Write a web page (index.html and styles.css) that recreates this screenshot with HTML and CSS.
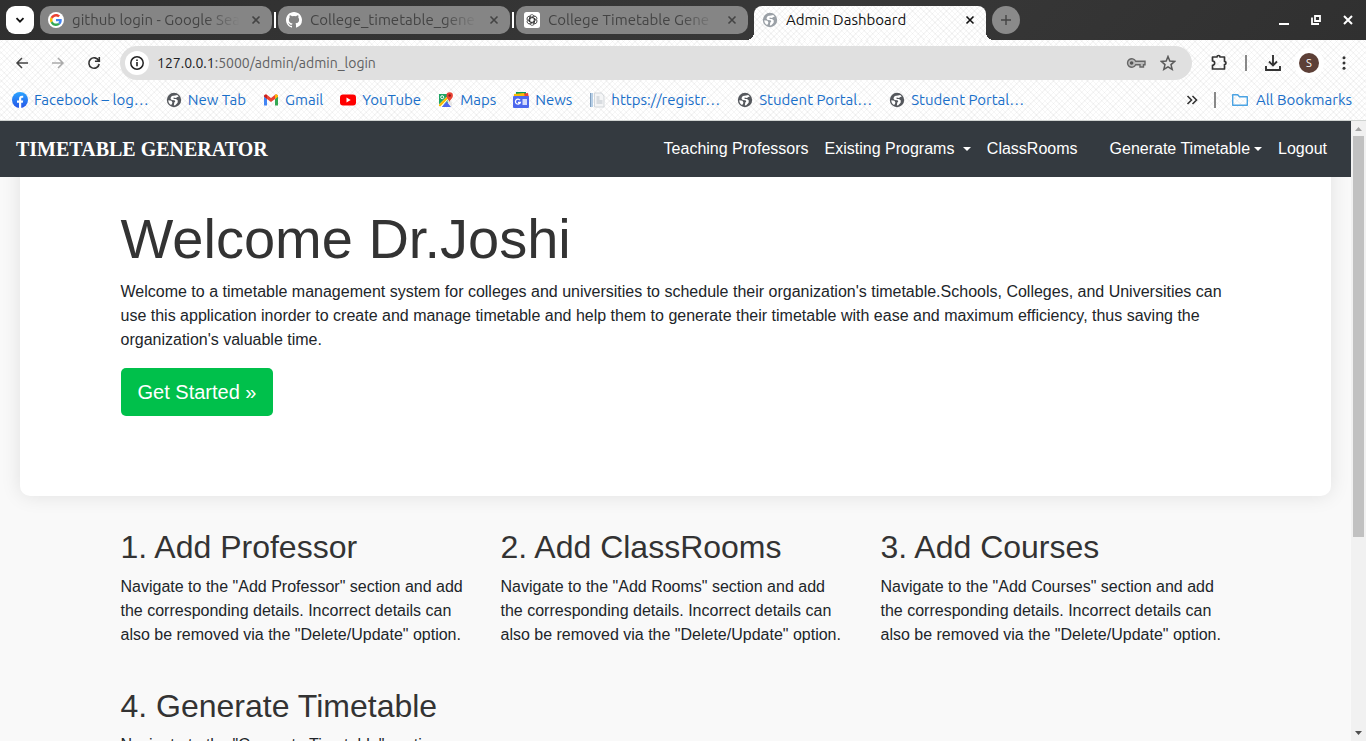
FILE: index.html
```html
<!DOCTYPE html>
<html lang="en">
<head>
<meta charset="utf-8">
<meta name="viewport" content="width=device-width, initial-scale=1">
<title>Admin Dashboard</title>
<link rel="stylesheet" href="styles.css">
</head>
<body>
<svg class="sprite" aria-hidden="true">
  <symbol id="globe" viewBox="0 0 16 16"><circle cx="8" cy="8" r="7.2" fill="currentColor"/><path d="M12.8 4.600 11.200 3 9 3.400 5.800 4 4.400 6.300l1.200 1.700 2.900.2.800 1.300-1 1-.5 2.900 1.500-.2 2.300-2.400.2-2.200-1.800-1.700H7.600V5.600l2.400.3 1.300-1zM2.300 8.200l3.200.6.9 1.700-.6 1.900-1.300.3C3 11.500 2.300 10 2.300 8.200z" fill="#fff"/></symbol>
  <symbol id="close" viewBox="0 0 10 10"><path d="m1.500 1.500 7 7m0-7-7 7" fill="none" stroke="currentColor" stroke-width="1.600"/></symbol>
  <symbol id="google" viewBox="0 0 48 48"><path fill="#ea4335" d="M24 9.500c3.540 0 6.710 1.220 9.210 3.600l6.850-6.850C35.900 2.380 30.470 0 24 0 14.620 0 6.510 5.380 2.560 13.220l7.980 6.190C12.430 13.720 17.740 9.500 24 9.500z"/><path fill="#4285f4" d="M46.980 24.550c0-1.570-.15-3.090-.38-4.550H24v9.020h12.940c-.58 2.960-2.260 5.480-4.780 7.180l7.730 6c4.510-4.180 7.090-10.360 7.090-17.650z"/><path fill="#fbbc05" d="M10.530 28.590A14.500 14.500 0 0 1 9.770 24c0-1.600.27-3.140.76-4.590l-7.980-6.190A23.900 23.900 0 0 0 0 24c0 3.880.92 7.540 2.560 10.780z"/><path fill="#34a853" d="M24 48c6.480 0 11.930-2.130 15.890-5.810l-7.730-6c-2.150 1.450-4.920 2.300-8.160 2.300-6.260 0-11.570-4.220-13.470-9.910l-7.980 6.190C6.510 42.620 14.620 48 24 48z"/></symbol>
  <symbol id="github" viewBox="0 0 16 16"><path fill="#fff" d="M8 0C3.580 0 0 3.580 0 8c0 3.540 2.290 6.530 5.470 7.590.4.070.55-.17.55-.38v-1.340c-2.230.48-2.700-1.070-2.700-1.070-.36-.92-.89-1.170-.89-1.170-.73-.5.050-.49.050-.49.800.060 1.230.830 1.230.830.710 1.220 1.870.87 2.330.66.070-.52.28-.87.500-1.070-1.770-.2-3.640-.89-3.640-3.950 0-.87.310-1.590.820-2.150-.08-.2-.36-1.020.08-2.120 0 0 .67-.21 2.200.82a7.600 7.600 0 0 1 4 0c1.530-1.040 2.200-.82 2.200-.82.440 1.100.160 1.920.080 2.120.510.560.820 1.270.820 2.150 0 3.070-1.870 3.750-3.650 3.950.290.250.540.730.540 1.480v2.200c0 .210.150.460.550.380A8 8 0 0 0 16 8c0-4.420-3.580-8-8-8z"/></symbol>
  <symbol id="knot" viewBox="0 0 16 16"><rect width="16" height="16" rx="2.500" fill="#fff"/><g fill="none" stroke="#222" stroke-width=".7"><path id="petal" d="M5.500 10V5.100a2.400 2.400 0 0 1 4.500-1.200M7.600 6.300l3.200-1.800"/><use href="#petal" transform="rotate(60 8 8)"/><use href="#petal" transform="rotate(120 8 8)"/><use href="#petal" transform="rotate(180 8 8)"/><use href="#petal" transform="rotate(240 8 8)"/><use href="#petal" transform="rotate(300 8 8)"/></g></symbol>
</svg>

<div class="browser">
  <header class="tabstrip">
    <button class="tab-search" aria-label="Search tabs"><svg width="10" height="10" viewBox="0 0 10 10"><path d="m1.500 3.200 3.500 3.500 3.500-3.500" fill="none" stroke="#111" stroke-width="1.800"/></svg></button>
    <div class="tabs">
      <div class="tab"><span class="tab-badge"><svg width="12" height="12"><use href="#google"/></svg></span><span class="tab-title">github login - Google Sea</span><button class="tab-close" aria-label="Close tab"><svg width="10" height="10"><use href="#close"/></svg></button></div>
      <div class="tab divided"><svg width="16" height="16"><use href="#github"/></svg><span class="tab-title">College_timetable_gene</span><button class="tab-close" aria-label="Close tab"><svg width="10" height="10"><use href="#close"/></svg></button></div>
      <div class="tab divided"><svg width="16" height="16"><use href="#knot"/></svg><span class="tab-title">College Timetable Gene</span><button class="tab-close" aria-label="Close tab"><svg width="10" height="10"><use href="#close"/></svg></button></div>
      <div class="tab active"><svg class="pale" width="16" height="16"><use href="#globe"/></svg><span class="tab-title">Admin Dashboard</span><button class="tab-close" aria-label="Close tab"><svg width="10" height="10"><use href="#close"/></svg></button></div>
    </div>
    <button class="new-tab" aria-label="New tab"><svg width="12" height="12" viewBox="0 0 12 12"><path d="M6 1v10M1 6h10" stroke="#444" stroke-width="1.400"/></svg></button>
    <div class="window-controls">
      <button aria-label="Minimize"><svg width="12" height="12" viewBox="0 0 12 12"><path d="M1 10h10" stroke="#fff" stroke-width="2"/></svg></button>
      <button aria-label="Restore"><svg width="12" height="12" viewBox="0 0 12 12"><path d="M5 2h5v5H5zM2 3.500V10h7" fill="none" stroke="#fff" stroke-width="1.800"/></svg></button>
      <button aria-label="Close window"><svg width="12" height="12" viewBox="0 0 12 12"><path d="m2 2 8 8m0-8-8 8" stroke="#fff" stroke-width="2"/></svg></button>
    </div>
  </header>

  <div class="chrome">
    <div class="toolbar">
      <div class="nav-buttons">
        <button aria-label="Back"><svg width="16" height="16" viewBox="0 0 16 16"><path d="M14 8H3m5-5L3 8l5 5" fill="none" stroke="#444" stroke-width="1.500"/></svg></button>
        <button aria-label="Forward"><svg width="16" height="16" viewBox="0 0 16 16"><path d="M2 8h11M8 3l5 5-5 5" fill="none" stroke="#aaa" stroke-width="1.500"/></svg></button>
        <button aria-label="Reload"><svg width="16" height="16" viewBox="0 0 16 16"><path d="M12.700 5.600A5.200 5.200 0 1 0 13.200 9M13.300 2v4.200H9" fill="none" stroke="#333" stroke-width="1.600"/></svg></button>
      </div>
      <div class="omnibox">
        <button class="site-info" aria-label="Site information"><svg width="16" height="16" viewBox="0 0 16 16"><circle cx="8" cy="8" r="6.200" fill="none" stroke="#222" stroke-width="1.500"/><path d="M8 7v4.300M8 4.500v1.500" stroke="#222" stroke-width="1.600"/></svg></button>
        <span class="url"><span class="host">127.0.0.1</span>:5000/admin/admin_login</span>
        <button aria-label="Passwords"><svg width="20" height="16" viewBox="0 0 20 16"><path d="M9.700 6.200A4.300 4.300 0 1 0 9.700 9.800H14V12h3.500V9.800H19V6.200z" fill="#bbb" stroke="#666" stroke-width="1.400"/><circle cx="5.600" cy="8" r="1.800" fill="#555"/></svg></button>
        <button aria-label="Bookmark this page"><svg width="16" height="16" viewBox="0 0 16 16"><path d="m8 1.500 1.800 4.500 4.900.4-3.700 3.200 1.200 4.800L8 11.800l-4.200 2.600L5 9.600 1.300 6.400 6.200 6z" fill="none" stroke="#5a5a5a" stroke-width="1.500"/></svg></button>
      </div>
      <div class="actions">
        <button aria-label="Extensions"><svg width="18" height="18" viewBox="0 0 18 18"><path d="M2.500 3H7a1.500 1.500 0 0 1 3 0h4.500v4.500a1.500 1.500 0 0 1 0 3V15h-12v-3.700a2 2 0 0 0 0-4.300z" fill="none" stroke="#333" stroke-width="1.700" stroke-linejoin="round"/></svg></button>
        <span class="rule"></span>
        <button aria-label="Downloads"><svg width="18" height="18" viewBox="0 0 18 18"><path d="M9 1v10M5 7.500l4 4 4-4M2 12v4h14v-4" fill="none" stroke="#333" stroke-width="1.900"/></svg></button>
        <button class="avatar" aria-label="Profile">S</button>
        <button aria-label="Menu"><svg width="16" height="16" viewBox="0 0 16 16"><g fill="#333"><circle cx="8" cy="2.800" r="1.500"/><circle cx="8" cy="8" r="1.500"/><circle cx="8" cy="13.200" r="1.500"/></g></svg></button>
      </div>
    </div>

    <nav class="bookmarks" aria-label="Bookmarks">
      <a href="#"><svg width="16" height="16" viewBox="0 0 16 16"><defs><linearGradient id="fb" x1="0" y1="0" x2="0" y2="1"><stop offset="0" stop-color="#2aa4ff"/><stop offset="1" stop-color="#2554e8"/></linearGradient></defs><circle cx="8" cy="8" r="8" fill="url(#fb)"/><path d="M7 16v-5.200H5V8.400h2V6.900C7 4.700 8.200 3.700 10 3.700l1.200.1v2h-.9c-.9 0-1.100.4-1.100 1.100v1.500h2l-.4 2.400H9.200V16z" fill="#fff"/></svg>Facebook – log…</a>
      <a href="#"><svg class="dark" width="16" height="16"><use href="#globe"/></svg>New Tab</a>
      <a href="#"><svg width="16" height="16" viewBox="0 0 16 16"><path d="M1 13.500h3V7L1 4.500z" fill="#4285f4"/><path d="M12 13.500h3v-9L12 7z" fill="#34a853"/><path d="M1 4.500C1 2.500 3 2 4.200 3L8 6l3.800-3C13 2 15 2.500 15 4.500l-3 2.600-4 3-4-3z" fill="#ea4335"/><path d="M12 7.100 15 4.500C15 2.500 13 2 12 3z" fill="#fbbc04"/><path d="M1 4.500 4 7V3C2.800 2.200 1 2.800 1 4.500z" fill="#c5221f"/></svg>Gmail</a>
      <a href="#"><svg width="16" height="16" viewBox="0 0 16 16"><rect y="2.500" width="16" height="11" rx="3" fill="#f00"/><path d="m6.500 5.600 4.200 2.400-4.200 2.400z" fill="#fff"/></svg>YouTube</a>
      <a href="#"><svg width="16" height="16" viewBox="0 0 16 16"><path d="M1 2h9l1 8-9 4.500H1z" fill="#1fa463"/><path d="m3.500 15 5-5.500L13 15z" fill="#4d68ee"/><path d="M1 15V12.500L8.500 5l2 2-7 8z" fill="#fff"/><path d="M1 12.500 8.500 5 10 6.500 2.300 14.500 1 14z" fill="#fbbc04"/><path d="m9 9 2-1.500 3 3V15z" fill="#e6e6e6"/><circle cx="4.200" cy="5.200" r="1.500" fill="none" stroke="#fff"/><path d="M11.500 10C11 7.500 8.500 6.500 8.500 3.500a3.200 3.200 0 0 1 6.400 0C14.900 6.500 12 7.500 11.500 10z" fill="#ea4335"/><circle cx="11.700" cy="3.500" r="1.200" fill="#8c1913"/></svg>Maps</a>
      <a href="#"><svg width="16" height="16" viewBox="0 0 16 16"><path d="M3 0h10v5H3z" fill="#0c9d58"/><path d="m6 2 9-1 1 5H6z" fill="#ea4335"/><path d="m1 2 10-1 1 5H1z" fill="#fbbc04"/><rect y="4" width="16" height="12" rx="1" fill="#4d68ee"/><path d="M7 8.200a2.500 2.500 0 1 0 .3 2.300H5M9.500 8H14m-4.500 2H14m-4.500 2H14" fill="none" stroke="#fff" stroke-width="1.300"/></svg>News</a>
      <a href="#"><svg width="16" height="16" viewBox="0 0 16 16"><path d="M1 1h3v14H1z" fill="#b7cfe6"/><path d="M1 1h1v14H1z" fill="#7f9fc0"/><path d="M5.500 1h7L15 4v11H5.500z" fill="#f4f5f6" stroke="#d3d7db"/><path d="M7.500 5h3m-3 2h3m-3 2h6m-6 2h6" stroke="#bcc3ca"/></svg>https://registr…</a>
      <a href="#"><svg class="dark" width="16" height="16"><use href="#globe"/></svg>Student Portal…</a>
      <a href="#"><svg class="dark" width="16" height="16"><use href="#globe"/></svg>Student Portal…</a>
      <div class="bookmarks-end">
        <button aria-label="More bookmarks"><svg width="12" height="12" viewBox="0 0 12 12"><path d="m1.500 2 4 4-4 4m5-8 4 4-4 4" fill="none" stroke="#333" stroke-width="1.600"/></svg></button>
        <span class="rule"></span>
        <a href="#"><svg width="16" height="16" viewBox="0 0 16 16"><path d="M.7 13.300V2.700h5l1.800 2h7.800v8.600z" fill="none" stroke="#4ba3e3" stroke-width="1.400" stroke-linejoin="round"/></svg>All Bookmarks</a>
      </div>
    </nav>
  </div>

  <div class="viewport">
    <div class="page">
      <nav class="navbar">
        <a class="brand" href="#">TIMETABLE GENERATOR</a>
        <ul class="menu">
          <li><a href="#">Teaching Professors</a></li>
          <li><a class="dropdown" href="#">Existing Programs&nbsp;</a></li>
          <li><a href="#">ClassRooms</a></li>
          <li class="spaced"><a class="dropdown" href="#">Generate Timetable</a></li>
          <li><a href="#">Logout</a></li>
        </ul>
      </nav>
      <main>
        <section class="hero">
          <div class="container">
            <h1>Welcome Dr.Joshi</h1>
            <p>Welcome to a timetable management system for colleges and universities to schedule their organization's timetable.Schools, Colleges, and Universities can use this application inorder to create and manage timetable and help them to generate their timetable with ease and maximum efficiency, thus saving the organization's valuable time.</p>
            <a class="cta" href="#">Get Started »</a>
          </div>
        </section>
        <section class="container steps">
          <article><h2>1. Add Professor</h2><p>Navigate to the "Add Professor" section and add the corresponding details. Incorrect details can also be removed via the "Delete/Update" option.</p></article>
          <article><h2>2. Add ClassRooms</h2><p>Navigate to the "Add Rooms" section and add the corresponding details. Incorrect details can also be removed via the "Delete/Update" option.</p></article>
          <article><h2>3. Add Courses</h2><p>Navigate to the "Add Courses" section and add the corresponding details. Incorrect details can also be removed via the "Delete/Update" option.</p></article>
          <article><h2>4. Generate Timetable</h2><p>Navigate to the "Generate Timetable" section</p></article>
        </section>
      </main>
    </div>
    <div class="scrollbar" aria-hidden="true">
      <svg width="15" height="15" viewBox="0 0 15 15"><path d="m4 10 3.500-4L11 10z" fill="#a3a3a3"/></svg>
      <div class="track"><div class="thumb"></div></div>
      <svg width="15" height="15" viewBox="0 0 15 15"><path d="m4 5 3.500 4L11 5z" fill="#505050"/></svg>
    </div>
  </div>
</div>
</body>
</html>
```
FILE: styles.css
```css
* { box-sizing: border-box; }
body { margin: 0; font-family: "Liberation Sans", Arial, sans-serif; font-size: 16px; line-height: 24px; color: #212529; }
a { color: inherit; text-decoration: none; }
button { display: flex; align-items: center; justify-content: center; padding: 0; border: 0; background: none; font: inherit; color: inherit; cursor: pointer; }
svg { display: block; flex: none; }
.sprite { position: absolute; width: 0; height: 0; }

.browser { display: flex; flex-direction: column; height: 100vh; overflow: hidden; }

.tabstrip, .chrome { font-family: Ubuntu, "Noto Sans", sans-serif; font-size: 15px; line-height: 20px; flex: none; }
.tabstrip { display: flex; align-items: flex-start; gap: 6px; height: 40px; padding: 6px 12px 0 6px; background: linear-gradient(135deg, #2f2f2f, #383838 60%, #303030); }
.tab-search { width: 28px; height: 28px; border-radius: 9px; background: #fff; }
.tabs { display: flex; gap: 6px; flex: 0 1 946px; min-width: 0; }
.tab { position: relative; display: flex; align-items: center; gap: 8px; flex: 1 1 0; min-width: 0; height: 28px; padding: 0 11px 0 8px; border-radius: 10px; background: #858585; color: #444; }
.tab-badge { display: flex; align-items: center; justify-content: center; width: 16px; height: 16px; border-radius: 50%; background: #fff; }
.tab-title { flex: 1; min-width: 0; overflow: hidden; white-space: nowrap; mask-image: linear-gradient(to right, #000 78%, transparent 98%); }
.tab-close { width: 10px; height: 10px; }
.divided::before { content: ""; position: absolute; left: -4px; top: 6px; width: 2px; height: 16px; background: #fff; }
.active, .chrome {
  background-color: #fff;
  background-image:
    repeating-linear-gradient(45deg, rgba(0,0,0,.035) 0 1px, transparent 1px 4px),
    repeating-linear-gradient(-45deg, rgba(0,0,0,.035) 0 1px, transparent 1px 4px);
}
.active { height: 34px; padding-bottom: 6px; border-radius: 8px 8px 0 0; color: #111; }
.active .tab-title { mask-image: none; }
.active::before, .active::after { content: ""; position: absolute; bottom: 0; width: 8px; height: 8px; }
.active::before { left: -8px; background: radial-gradient(circle at 0 0, transparent 8px, #fafafa 8px); }
.active::after { right: -8px; background: radial-gradient(circle at 100% 0, transparent 8px, #fafafa 8px); }
.pale { color: #9aa0a6; }
.dark { color: #55585d; }
.new-tab { width: 28px; height: 28px; border-radius: 50%; background: #8a8a8a; }
.window-controls { display: flex; gap: 20px; align-items: center; height: 28px; margin-left: auto; }

.chrome { border-bottom: 1px solid #cfd3d1; }
.toolbar { display: flex; align-items: center; gap: 18px; height: 46px; padding: 0 14px; }
.nav-buttons { display: flex; gap: 20px; }
.omnibox { display: flex; align-items: center; gap: 14px; flex: 1; height: 34px; padding: 0 16px 0 5px; border-radius: 17px; background: #e0e0e0; }
.site-info { width: 24px; height: 24px; border-radius: 50%; background: #fff; }
.url { flex: 1; margin-left: -6px; font-size: 14px; color: #5f6062; }
.host { color: #202124; }
.actions { display: flex; align-items: center; gap: 17px; }
.rule { width: 2px; height: 16px; background: #888; }
.avatar { width: 20px; height: 20px; border-radius: 50%; background: #5d4037; color: #fff; font-size: 11px; box-shadow: 0 0 0 5px #fff; }
.bookmarks { display: flex; align-items: center; gap: 17px; height: 34px; padding: 0 14px 6px 12px; color: #1a6fc9; white-space: nowrap; }
.bookmarks a { display: flex; align-items: center; gap: 6px; }
.bookmarks-end { display: flex; align-items: center; gap: 16px; margin-left: auto; }
.bookmarks .bookmarks-end a { gap: 8px; }

.viewport { display: flex; flex: 1; min-height: 0; }
.page { flex: 1; min-width: 0; overflow: hidden; background: #f9f9f9; }
.navbar { position: relative; z-index: 1; display: flex; align-items: center; justify-content: space-between; padding: 8px 16px; background: #343a40; color: #fff; }
.brand { font-family: "Liberation Serif", "Times New Roman", serif; font-size: 20px; line-height: 30px; font-weight: 700; }
.menu { display: flex; margin: 0; padding: 0; list-style: none; }
.menu a { display: flex; align-items: center; padding: 8px; }
.spaced { margin-left: 16px; }
.dropdown::after { content: ""; margin-left: 4px; border: 4px solid transparent; border-top-color: currentColor; border-bottom: 0; }
.container { max-width: 1140px; margin: 0 auto; padding: 0 15px; }
.hero { margin: -32px 20px 0; padding: 60px 0 80px; border-radius: 10px; background: #fff; box-shadow: 0 0 20px rgba(0,0,0,.1); }
h1, h2 { margin: 0 0 8px; font-weight: 500; line-height: 1.2; color: #333; }
h1 { font-size: 56px; }
h2 { font-size: 32px; }
p { margin: 0 0 16px; }
.cta { display: inline-block; padding: 9px 17px; border-radius: 5px; background: #00c04b; color: #fff; font-size: 20px; line-height: 30px; vertical-align: top; }
.steps { display: grid; grid-template-columns: repeat(3, 1fr); gap: 24px 30px; padding-top: 32px; }

.scrollbar { display: flex; flex-direction: column; flex: none; width: 15px; background: #f1f1f1; }
.track { flex: 1; padding: 0 2px; }
.thumb { height: 68%; background: #c1c1c1; }
```
